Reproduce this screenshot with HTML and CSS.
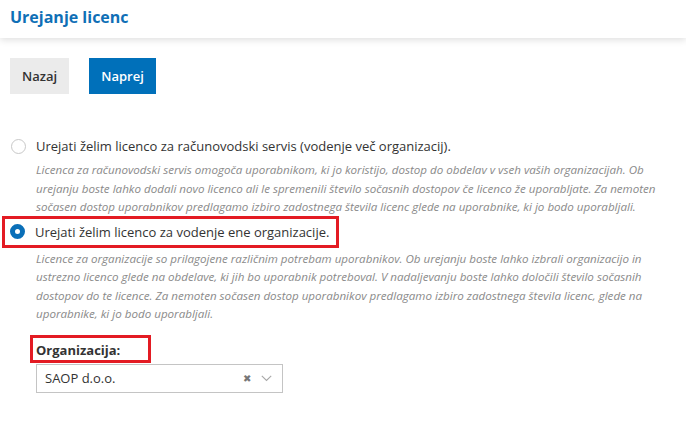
FILE: index.html
```html
<!DOCTYPE html>
<html lang="sl">
<head>
<meta charset="utf-8">
<title>Urejanje licenc</title>
<link rel="stylesheet" href="styles.css">
</head>
<body>
<header class="header">
  <h1 class="title">Urejanje licenc</h1>
</header>
<main class="content">
  <div class="actions">
    <button class="btn btn-back">Nazaj</button>
    <button class="btn btn-next">Naprej</button>
  </div>
  <div class="options">
    <div class="option">
      <div class="option-row">
        <span class="radio"></span>
        <span class="option-label">Urejati želim licenco za računovodski servis (vodenje več organizacij).</span>
      </div>
      <p class="option-desc">Licenca za računovodski servis omogoča uporabnikom, ki jo koristijo, dostop do obdelav v vseh vaših organizacijah. Ob urejanju boste lahko dodali novo licenco ali le spremenili število sočasnih dostopov če licenco že uporabljate. Za nemoten sočasen dostop uporabnikov predlagamo izbiro zadostnega števila licenc glede na uporabnike, ki jo bodo uporabljali.</p>
    </div>
    <div class="option option-second">
      <div class="option-row highlight">
        <span class="radio radio-checked"></span>
        <span class="option-label">Urejati želim licenco za vodenje ene organizacije.</span>
      </div>
      <p class="option-desc">Licence za organizacije so prilagojene različnim potrebam uporabnikov. Ob urejanju boste lahko izbrali organizacijo in ustrezno licenco glede na obdelave, ki jih bo uporabnik potreboval. V nadaljevanju boste lahko določili število sočasnih dostopov do te licence. Za nemoten sočasen dostop uporabnikov predlagamo izbiro zadostnega števila licenc, glede na uporabnike, ki jo bodo uporabljali.</p>
    </div>
  </div>
  <div class="org">
    <div class="org-label highlight">Organizacija:</div>
    <div class="select">
      <span class="select-value">SAOP d.o.o.</span>
      <span class="select-clear">&#10006;</span>
      <svg class="select-arrow" width="11" height="7" viewBox="0 0 11 7"><path d="M0.8 0.8 L5.5 5.5 L10.2 0.8" fill="none" stroke="#a8a8a8" stroke-width="1.1"/></svg>
    </div>
  </div>
</main>
</body>
</html>
```
FILE: styles.css
```css
* { box-sizing: border-box; }
html, body { margin: 0; padding: 0; background: #fff; }
body {
  font-family: "Open Sans", "Liberation Sans", sans-serif;
  color: #333;
  width: 686px;
  height: 421px;
  overflow: hidden;
}
.header {
  height: 38px;
  padding: 0 10px;
  display: flex;
  align-items: center;
  background: #fff;
  box-shadow: 0 2px 7px rgba(0, 0, 0, 0.13);
  position: relative;
}
.title {
  margin: 0;
  font-size: 16px;
  font-weight: 700;
  color: #0f6fb6;
  line-height: 20px;
  margin-top: -5px;
}
.content {
  padding: 20px 10px 0 10px;
}
.actions {
  display: flex;
  gap: 20px;
}
.btn {
  font-family: "Open Sans", "Liberation Sans", sans-serif;
  font-size: 13px;
  font-weight: 600;
  height: 36px;
  border: 0;
  padding: 0 12px;
  cursor: pointer;
}
.btn-back { background: #ebebeb; color: #333; width: 59px; }
.btn-next { background: #0070ba; color: #fff; width: 67px; }
.options {
  margin-top: 39px;
}
.option-row {
  display: flex;
  align-items: center;
  gap: 10px;
  height: 26px;
}
.radio {
  width: 15px;
  height: 15px;
  border-radius: 50%;
  border: 1px solid #c8c8c8;
  background: #fff;
  flex: none;
  margin-left: 1px;
}
.radio-checked {
  border: 5px solid #0a6fb8;
}
.option-label {
  font-size: 13px;
  color: #333;
  line-height: 18px;
}
.option-desc {
  margin: 2px 0 0 26px;
  font-size: 11.6px;
  font-style: italic;
  color: #8a8a8a;
  line-height: 18.5px;
  width: 636px;
}
.option-second {
  margin-top: -1px;
}
.highlight {
  border: 3px solid #e31b23;
}
.option-second .option-row {
  display: inline-flex;
  height: 32px;
  margin-left: -8px;
  padding: 0 7px 0 4px;
}
.org {
  margin: 11px 0 0 26px;
}
.org-label {
  width: 121px;
  height: 28px;
  margin-left: -6px;
  padding: 0 0 0 3px;
  font-size: 13px;
  font-weight: 700;
  line-height: 24px;
  color: #333;
}
.select {
  margin-top: 1px;
  width: 247px;
  height: 29px;
  border: 1px solid #c4c4c4;
  display: flex;
  align-items: center;
  padding: 0 10px 0 8px;
}
.select-value {
  font-size: 13px;
  color: #333;
  flex: 1;
}
.select-clear {
  font-size: 10px;
  color: #777;
  margin-right: 10px;
}
.select-arrow { display: block; }
```
